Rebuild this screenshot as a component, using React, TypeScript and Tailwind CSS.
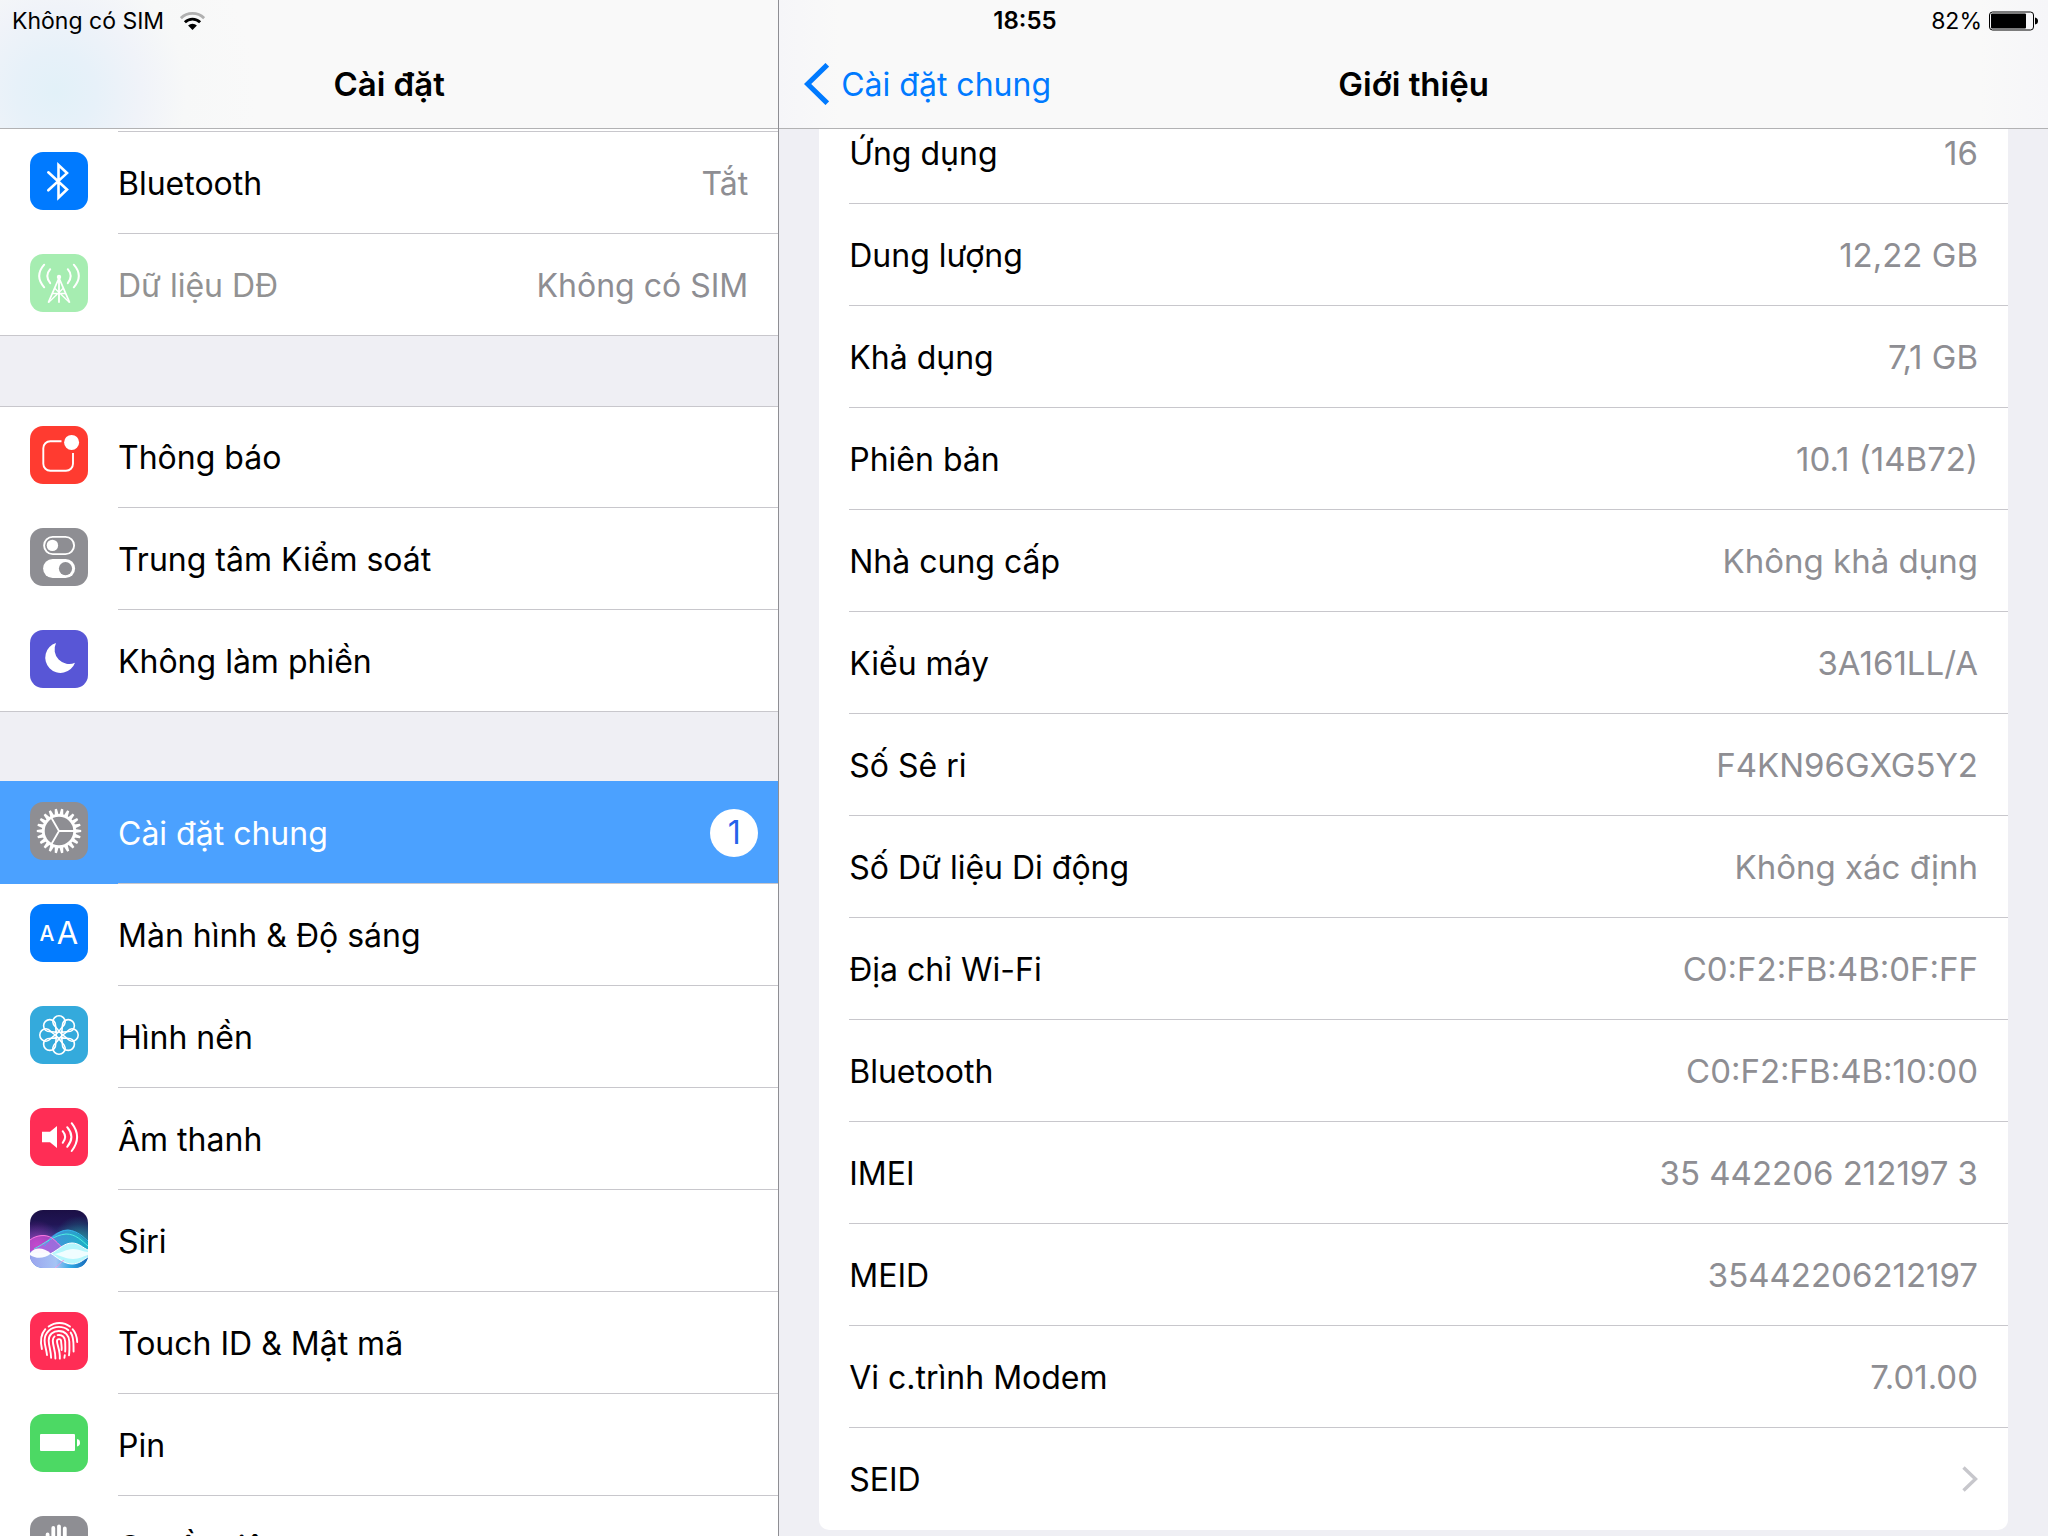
import type { ReactNode } from "react";

type MenuItem = {
  label: string;
  icon: ReactNode;
  value?: string;
  badge?: number;
  selected?: boolean;
  disabled?: boolean;
};

function AppIcon({ fill, children }: { fill: string; children: ReactNode }) {
  return (
    <svg viewBox="0 0 58 58" className="size-[58px] shrink-0" fill="none" aria-hidden="true">
      <rect width="58" height="58" rx="13" fill={fill} />
      {children}
    </svg>
  );
}

function BluetoothIcon() {
  return (
    <AppIcon fill="#007aff">
      <path
        d="M18.3 20.3 37 37.5 28.5 45.6V13L37 21.1 18.3 38.3"
        stroke="#fff"
        strokeWidth="2.6"
        strokeLinecap="round"
      />
    </AppIcon>
  );
}

function CellularIcon() {
  return (
    <AppIcon fill="#a6edb1">
      <g stroke="#fff" strokeWidth="2" strokeLinecap="round">
        <path d="M14.2 10.7Q4.2 22 14.2 33.3M43.8 10.7Q53.8 22 43.8 33.3" />
        <path d="M20.2 15.2Q14.4 22 20.2 29.2M37.8 15.2Q43.6 22 37.8 29.2" />
        <path d="M29 24 18.6 48M29 24 39.4 48M29 24V48" strokeWidth="1.8" />
        <path d="M25 34.5 39 48M33 34.5 19 48M22.5 39.5H35.5" strokeWidth="1.3" />
      </g>
      <circle cx="29" cy="23" r="2.2" fill="#fff" />
    </AppIcon>
  );
}

function NotificationsIcon() {
  return (
    <AppIcon fill="#ff3b30">
      <path
        d="M31.5 15.2H20.3a7 7 0 0 0-7 7V37.8a7 7 0 0 0 7 7H36a7 7 0 0 0 7-7V27"
        stroke="#fff"
        strokeWidth="1.9"
      />
      <circle cx="41.6" cy="16.4" r="7.5" fill="#fff" />
    </AppIcon>
  );
}

function ControlCenterIcon() {
  return (
    <AppIcon fill="#8e8e93">
      <rect x="14.1" y="8.9" width="30" height="17.2" rx="8.6" stroke="#fff" strokeWidth="1.9" />
      <circle cx="22.4" cy="17.4" r="5.7" fill="#fff" />
      <rect x="13.1" y="31" width="32" height="19" rx="9.5" fill="#fff" />
      <circle cx="35.5" cy="40.6" r="6.6" fill="#8e8e93" />
    </AppIcon>
  );
}

function MoonIcon() {
  return (
    <AppIcon fill="#5856d6">
      <path d="M26 13A15.3 15.3 0 1 0 45 32.7 14.6 14.6 0 0 1 26 13Z" fill="#fff" />
    </AppIcon>
  );
}

function GearIcon() {
  const teeth = Array.from({ length: 22 }, (_, i) => (i * 360) / 22);
  return (
    <AppIcon fill="#8e8e93">
      <g transform="translate(29 29)">
        {teeth.map((angle) => (
          <path key={angle} d="M16-2 22.2-1.1V1.1L16 2Z" fill="#fff" transform={`rotate(${angle})`} />
        ))}
        <circle r="15.7" stroke="#fff" strokeWidth="2.8" />
        <path d="M0 0H15M0 0-7.5-13M0 0-7.5 13" stroke="#fff" strokeWidth="1.8" />
      </g>
    </AppIcon>
  );
}

function DisplayIcon() {
  return (
    <AppIcon fill="#007aff">
      <text x="9.6" y="37.3" fill="#fff" fontSize="21" fontWeight="500">
        A
      </text>
      <text x="26.8" y="39.8" fill="#fff" fontSize="31" fontWeight="400">
        A
      </text>
    </AppIcon>
  );
}

function WallpaperIcon() {
  const petals = [0, 45, 90, 135, 180, 225, 270, 315];
  return (
    <AppIcon fill="#34aadc">
      <g transform="translate(29 29)" stroke="#fff" strokeWidth="1.6">
        {petals.map((angle) => (
          <path
            key={angle}
            d="M0-3.4C-1.6-7.5-6.2-9-6.2-13A6.2 6.2 0 0 1 6.2-13C6.2-9 1.6-7.5 0-3.4Z"
            transform={`rotate(${angle})`}
          />
        ))}
        <circle r="3" />
      </g>
    </AppIcon>
  );
}

function SoundIcon() {
  return (
    <AppIcon fill="#ff2d55">
      <path d="M12 23.8H20L27 18V40L20 34.2H12Z" fill="#fff" />
      <path
        d="M32.7 23.2Q37.6 29 32.7 34.8M37.2 19.2Q45.6 29 37.2 38.8M41.7 15.2Q52.5 29 41.7 43"
        stroke="#fff"
        strokeWidth="2"
        strokeLinecap="round"
      />
    </AppIcon>
  );
}

function SiriIcon() {
  return (
    <svg viewBox="0 0 58 58" className="size-[58px] shrink-0" aria-hidden="true">
      <defs>
        <linearGradient id="siri-sky" x1="0" y1="0" x2="0" y2="1">
          <stop offset="0" stopColor="#1b0f45" />
          <stop offset="0.25" stopColor="#211656" />
          <stop offset="0.5" stopColor="#34408c" />
          <stop offset="1" stopColor="#3a9be0" />
        </linearGradient>
        <radialGradient id="siri-pink" cx="0.12" cy="0.6" r="0.42">
          <stop offset="0" stopColor="#d23cc8" stopOpacity="0.7" />
          <stop offset="1" stopColor="#a02cb0" stopOpacity="0" />
        </radialGradient>
        <radialGradient id="siri-green" cx="0.85" cy="0.55" r="0.45">
          <stop offset="0" stopColor="#17c4a6" stopOpacity="0.7" />
          <stop offset="1" stopColor="#17a4a6" stopOpacity="0" />
        </radialGradient>
        <linearGradient id="siri-wave" x1="0" y1="0" x2="1" y2="0">
          <stop offset="0" stopColor="#7d7be8" />
          <stop offset="0.5" stopColor="#3fa4e4" />
          <stop offset="1" stopColor="#19b3c9" />
        </linearGradient>
        <linearGradient id="siri-low" x1="0" y1="0" x2="1" y2="0">
          <stop offset="0" stopColor="#9aa4ee" />
          <stop offset="0.45" stopColor="#a6c4f5" />
          <stop offset="0.7" stopColor="#2fa8e4" />
          <stop offset="1" stopColor="#1767b8" />
        </linearGradient>
        <clipPath id="siri-clip">
          <rect width="58" height="58" rx="13" />
        </clipPath>
      </defs>
      <g clipPath="url(#siri-clip)">
        <rect width="58" height="58" fill="url(#siri-sky)" />
        <rect width="58" height="58" fill="url(#siri-pink)" />
        <rect width="58" height="58" fill="url(#siri-green)" />
        <path d="M0 41C14 38 22 20 37 20 47 20 52 28 58 32V44H0Z" fill="url(#siri-wave)" opacity="0.85" />
        <path d="M0 30C6 25 16 24 22 28 30 34 34 42 42 44H14L0 41Z" fill="#e04fdc" opacity="0.55" />
        <path d="M0 43H58V58H0Z" fill="url(#siri-low)" />
        <path d="M4 39C14 34 24 25 36 24 46 24 52 31 58 36" fill="none" stroke="#4ff0e0" strokeWidth="1" />
        <path d="M14 36C20 30 28 20 38 20 48 21 53 27 58 31" fill="none" stroke="#35b7f0" strokeWidth="1" />
        <path d="M0 30C6 25 16 24 22 28 30 34 34 42 42 44" fill="none" stroke="#ff7be4" strokeWidth="1" />
        <path d="M0 43C5 37 13 37 21 43.5 14 49 6 49 0 45Z" fill="#fff" opacity="0.95" />
        <path d="M21 43.5C28 40 34 33 42 33 49 33 53 38 58 40V47C53 50 49 54 42 54 34 54 28 48 21 43.5Z" fill="#b4f6fc" />
        <path d="M24 44C32 43 36 39 43 39 50 39 53 42 58 42V45C53 46 50 49 43 49 36 49 32 46 24 44Z" fill="#fff" opacity="0.8" />
        <path d="M21 43.5C28 40 34 33 42 33 49 33 53 38 58 40M21 43.5C28 48 34 54 42 54 49 54 53 50 58 47" fill="none" stroke="#fff" strokeWidth="1" />
        <path d="M25 58C29 55 31 52 34 50" stroke="#f0a0e8" strokeWidth="1" />
      </g>
    </svg>
  );
}

function TouchIdIcon() {
  return (
    <AppIcon fill="#ff2d55">
      <g stroke="#fff" strokeWidth="1.9" strokeLinecap="round">
        <path d="M18.7 14.6C25 9.7 34 9.7 40 14.6" />
        <path d="M15.3 17.2C10.6 22.5 10 29 11.9 37" />
        <path d="M42.6 17.2C45.8 20.8 47 25 47.2 30" />
        <path d="M17 43C16.4 37 14.6 34 14.6 28.5 14.6 20.5 21 14.9 28.8 14.9 33 14.9 36 16 38.4 18.2" />
        <path d="M40.7 20.6C44.4 26 43.3 33 43.6 39.5" />
        <path d="M21.1 45.7C21 38.5 18.7 34 18.7 28.5 18.7 22.5 23 19 28.8 19 35.5 19 39.2 23.8 39.3 29.5 39.5 35 39.6 39 39 43.4" />
        <path d="M25.4 46.6C25.6 38.5 22.8 34 22.8 28.8 22.8 27 23.5 25.4 24.6 24.4" />
        <path d="M27.6 23.1C32.3 22.3 35.2 25.5 35.2 29.8 35.2 34 35.5 36 35.2 39.5" />
        <path d="M29.8 46.6C30.4 39 27 33 27 29.2 27 26.6 31 26.4 31.1 29.2 31.3 33 32 35 31.6 38M34.8 43.2 34.4 45.8" />
      </g>
    </AppIcon>
  );
}

function BatteryIcon() {
  return (
    <AppIcon fill="#4cd964">
      <rect x="10" y="20" width="35" height="17" rx="1" fill="#fff" />
      <path d="M47 25Q50 25.4 50 28.7T47 32.4Z" fill="#fff" />
    </AppIcon>
  );
}

function PrivacyIcon() {
  return (
    <AppIcon fill="#8e8e93">
      <path
        d="M17.6 18.5V34M23.3 12V30M29 10.3V30M34.8 12.4V30"
        stroke="#fff"
        strokeWidth="3.8"
        strokeLinecap="round"
      />
      <path d="M15.6 28H36.8V33L42 28Q45 27 45 30L37 44Q34 49 27 49 15.6 49 15.6 36Z" fill="#fff" />
    </AppIcon>
  );
}

const sections: MenuItem[][] = [
  [
    { label: "Bluetooth", icon: <BluetoothIcon />, value: "Tắt" },
    { label: "Dữ liệu DĐ", icon: <CellularIcon />, value: "Không có SIM", disabled: true },
  ],
  [
    { label: "Thông báo", icon: <NotificationsIcon /> },
    { label: "Trung tâm Kiểm soát", icon: <ControlCenterIcon /> },
    { label: "Không làm phiền", icon: <MoonIcon /> },
  ],
  [
    { label: "Cài đặt chung", icon: <GearIcon />, badge: 1, selected: true },
    { label: "Màn hình & Độ sáng", icon: <DisplayIcon /> },
    { label: "Hình nền", icon: <WallpaperIcon /> },
    { label: "Âm thanh", icon: <SoundIcon /> },
    { label: "Siri", icon: <SiriIcon /> },
    { label: "Touch ID & Mật mã", icon: <TouchIdIcon /> },
    { label: "Pin", icon: <BatteryIcon /> },
    { label: "Quyền riêng tư", icon: <PrivacyIcon /> },
  ],
];

const details = [
  { label: "Ứng dụng", value: "16" },
  { label: "Dung lượng", value: "12,22 GB" },
  { label: "Khả dụng", value: "7,1 GB" },
  { label: "Phiên bản", value: "10.1 (14B72)" },
  { label: "Nhà cung cấp", value: "Không khả dụng" },
  { label: "Kiểu máy", value: "3A161LL/A" },
  { label: "Số Sê ri", value: "F4KN96GXG5Y2" },
  { label: "Số Dữ liệu Di động", value: "Không xác định" },
  { label: "Địa chỉ Wi-Fi", value: "C0:F2:FB:4B:0F:FF" },
  { label: "Bluetooth", value: "C0:F2:FB:4B:10:00" },
  { label: "IMEI", value: "35 442206 212197 3" },
  { label: "MEID", value: "35442206212197" },
  { label: "Vi c.trình Modem", value: "7.01.00" },
];

function StatusBar() {
  return (
    <div className="absolute inset-x-0 top-0 z-10 grid h-[41px] grid-cols-3 items-center pl-3 pr-[10px] text-[23px] leading-7">
      <div className="flex items-center gap-4">
        <span>Không có SIM</span>
        <svg viewBox="0 0 25 18" className="h-[18px] w-[25px]" fill="none" aria-hidden="true">
          <path d="M.9 6.2A16.5 16.5 0 0 1 24.1 6.2" stroke="#b0b0b0" strokeWidth="2.8" />
          <path d="M4.9 10.3A10.8 10.8 0 0 1 20.1 10.3" stroke="#000" strokeWidth="2.8" />
          <path d="M8.1 13.6A6.2 6.2 0 0 1 16.9 13.6L12.5 18Z" fill="#000" />
        </svg>
      </div>
      <time className="text-center text-2xl font-semibold">18:55</time>
      <div className="flex items-center justify-end gap-[6px]">
        <span>82%</span>
        <svg viewBox="0 0 50 20" className="h-5 w-[50px]" fill="none" aria-hidden="true">
          <rect x="1.5" y="1" width="44" height="18" rx="3" stroke="#000" />
          <rect x="3" y="2.5" width="35" height="15" rx="1" fill="#000" />
          <path d="M47 6.5Q50 7 50 10T47 13.5Z" fill="#000" />
        </svg>
      </div>
    </div>
  );
}

function MenuRow({ item, last }: { item: MenuItem; last: boolean }) {
  const separator = last ? "border-transparent" : "border-[#c8c7cc]";
  return (
    <li className={item.selected ? "bg-[#4ba1ff] text-white shadow-[0_-1px_0_#4ba1ff]" : ""}>
      <button
        type="button"
        disabled={item.disabled}
        aria-current={item.selected ? "page" : undefined}
        className="flex w-full items-start gap-[30px] pl-[30px] text-left"
      >
        <span className="pt-5">{item.icon}</span>
        <span className={`flex h-[102px] flex-1 items-center justify-between border-b ${separator} ${item.badge ? "pr-5" : "pr-[30px]"}`}>
          <span className={`pt-0.5 ${item.disabled ? "text-[#929292]" : ""}`}>{item.label}</span>
          {item.value && <span className="pt-0.5 text-[#8e8e93]">{item.value}</span>}
          {item.badge && (
            <span className="flex size-12 items-center justify-center rounded-full bg-white text-[#2563eb]">
              {item.badge}
            </span>
          )}
        </span>
      </button>
    </li>
  );
}

export default function App() {
  return (
    <div className="relative flex h-screen overflow-hidden bg-[#efeff4] font-['Inter','Liberation_Sans',sans-serif] text-[32px] leading-10 text-black">
      <StatusBar />

      <aside className="flex w-[38%] shrink-0 flex-col">
        <header className="h-[129px] shrink-0 border-b border-[#b2b2b4] bg-[#f9f9f9] bg-[radial-gradient(circle_at_56px_92px,#e2f1f8_0,#e7f1f9_40px,#f0f3f9_85px,#f7f8f8_130px,#f9f9f9_200px)] pt-10">
          <h1 className="text-center text-[33px] font-semibold leading-[88px]">Cài đặt</h1>
        </header>
        <nav aria-label="Cài đặt" className="min-h-0 flex-1 overflow-hidden">
          <div className="bg-white pl-[118px]">
            <div className="h-[3px] border-b border-[#c8c7cc]" />
          </div>
          <div className="flex flex-col gap-[70px]">
            {sections.map((items, i) => (
              <ul
                key={i}
                className={`bg-white ${i === 0 ? "" : "bg-[linear-gradient(#c8c7cc,#c8c7cc)] bg-[length:100%_1px] bg-no-repeat"} ${i === 2 ? "" : "shadow-[inset_0_-1px_0_#c8c7cc]"}`}
              >
                {items.map((item, j) => (
                  <MenuRow key={item.label} item={item} last={j === items.length - 1} />
                ))}
              </ul>
            ))}
          </div>
        </nav>
      </aside>

      <main className="flex min-w-0 flex-1 flex-col border-l border-[#8e8e93]">
        <header className="grid h-[129px] shrink-0 grid-cols-[1fr_auto_1fr] items-center border-b border-[#b2b2b4] bg-[linear-gradient(90deg,#f6f6f9,#f9f9f9_60px,#f9f9f9_1200px,#f6f6f9)] px-[25px] pt-10">
          <a href="#general" className="flex items-center gap-3 text-[#007aff]">
            <svg viewBox="0 0 25 42" className="h-[42px] w-[25px]" fill="none" aria-hidden="true">
              <path d="M23.3 1.8 3.6 21 23.3 40.2" stroke="currentColor" strokeWidth="5.2" />
            </svg>
            <span className="pt-0.5">Cài đặt chung</span>
          </a>
          <h2 className="text-[33px] font-semibold">Giới thiệu</h2>
        </header>
        <div className="min-h-0 flex-1 overflow-hidden px-10">
          <ul className="-mt-[27px] rounded-[10px] bg-white pl-[30px]">
            {details.map((row) => (
              <li
                key={row.label}
                className="flex h-[102px] items-center justify-between border-b border-[#c8c7cc] pr-[30px]"
              >
                <span className="pt-0.5">{row.label}</span>
                <span className="text-[33px] text-[#8e8e93]">{row.value}</span>
              </li>
            ))}
            <li>
              <a href="#seid" className="flex h-[102px] items-center justify-between pr-[30px]">
                <span className="pt-0.5">SEID</span>
                <svg viewBox="0 0 16 26" className="h-[26px] w-4" fill="none" aria-hidden="true">
                  <path d="M1.5 1.5 13.5 13 1.5 24.5" stroke="#c7c7cc" strokeWidth="3.4" />
                </svg>
              </a>
            </li>
          </ul>
        </div>
      </main>
    </div>
  );
}
